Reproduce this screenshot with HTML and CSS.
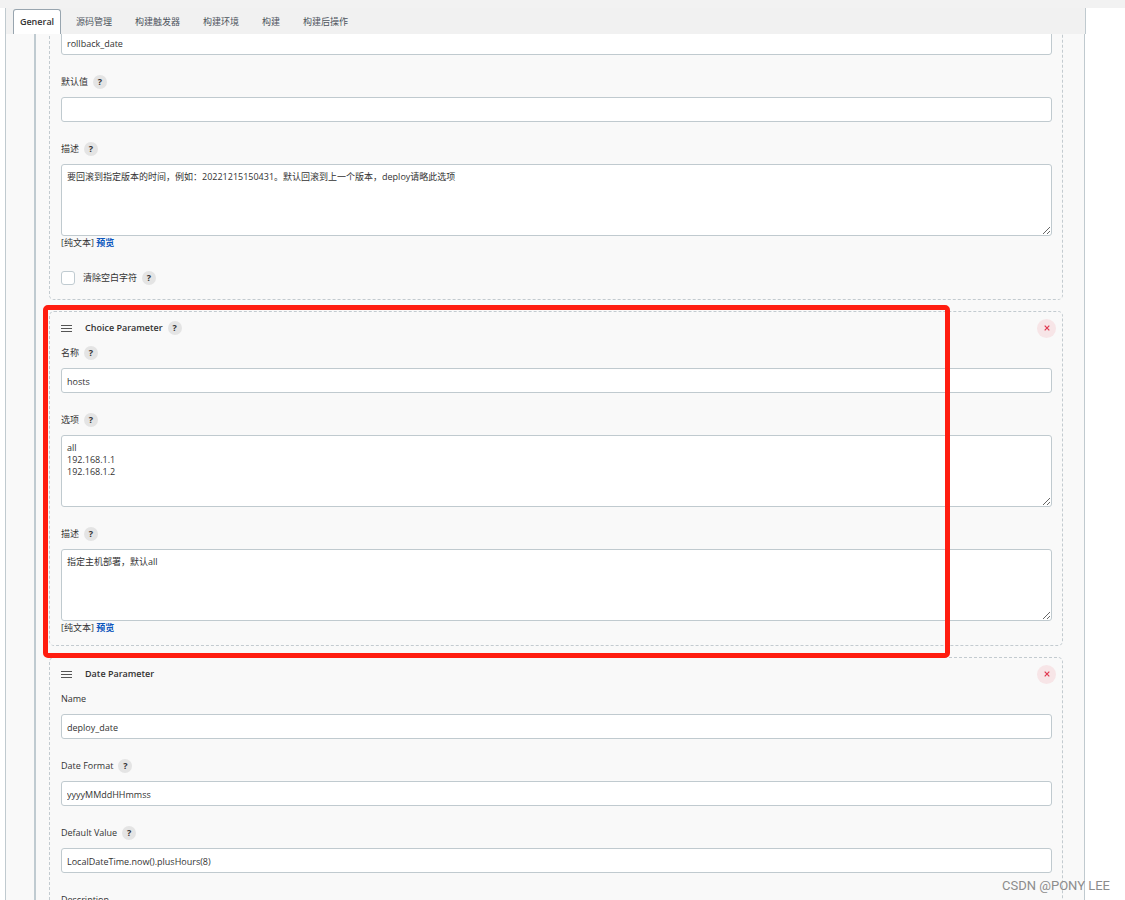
FILE: index.html
```html
<!DOCTYPE html>
<html lang="zh-CN">
<head>
<meta charset="utf-8">
<meta name="viewport" content="width=device-width, initial-scale=1">
<title>General</title>
<link rel="stylesheet" href="styles.css">
</head>
<body>
<div class="app">
  <nav class="tabs">
    <button class="tab tab-active" type="button">General</button>
    <button class="tab" type="button">源码管理</button>
    <button class="tab" type="button">构建触发器</button>
    <button class="tab" type="button">构建环境</button>
    <button class="tab" type="button">构建</button>
    <button class="tab" type="button">构建后操作</button>
  </nav>
  <main class="panel">
    <div class="params">
      <section class="card card-scrolled">
        <input class="control" type="text" value="rollback_date" aria-label="名称">
        <div class="label-row"><label for="s-default">默认值</label><button class="help" type="button">?</button></div>
        <input class="control" id="s-default" type="text">
        <div class="label-row"><label for="s-desc">描述</label><button class="help" type="button">?</button></div>
        <textarea class="control area" id="s-desc">要回滚到指定版本的时间，例如：20221215150431。默认回滚到上一个版本，deploy请略此选项</textarea>
        <div class="note">[纯文本] <a href="#preview">预览</a></div>
        <div class="check-row"><input class="check" id="s-trim" type="checkbox"><label for="s-trim">清除空白字符</label><button class="help" type="button">?</button></div>
      </section>

      <section class="card card-marked">
        <header class="card-head">
          <svg class="grip" viewBox="0 0 11 8" aria-hidden="true"><path d="M0 1.5h11M0 4.5h11M0 7.5h11"/></svg>
          <h2 class="title">Choice Parameter</h2><button class="help" type="button">?</button>
          <button class="remove" type="button" aria-label="删除"><svg viewBox="0 0 6 6"><path d="M.7.7l4.6 4.6M5.3.7L.7 5.3"/></svg></button>
        </header>
        <div class="label-row"><label for="c-name">名称</label><button class="help" type="button">?</button></div>
        <input class="control" id="c-name" type="text" value="hosts">
        <div class="label-row"><label for="c-options">选项</label><button class="help" type="button">?</button></div>
        <textarea class="control area" id="c-options">all
192.168.1.1
192.168.1.2</textarea>
        <div class="label-row"><label for="c-desc">描述</label><button class="help" type="button">?</button></div>
        <textarea class="control area" id="c-desc">指定主机部署，默认all</textarea>
        <div class="note">[纯文本] <a href="#preview">预览</a></div>
        <div class="marker"></div>
      </section>

      <section class="card">
        <header class="card-head">
          <svg class="grip" viewBox="0 0 11 8" aria-hidden="true"><path d="M0 1.5h11M0 4.5h11M0 7.5h11"/></svg>
          <h2 class="title">Date Parameter</h2>
          <button class="remove" type="button" aria-label="删除"><svg viewBox="0 0 6 6"><path d="M.7.7l4.6 4.6M5.3.7L.7 5.3"/></svg></button>
        </header>
        <div class="label-row"><label for="d-name">Name</label></div>
        <input class="control" id="d-name" type="text" value="deploy_date">
        <div class="label-row"><label for="d-format">Date Format</label><button class="help" type="button">?</button></div>
        <input class="control" id="d-format" type="text" value="yyyyMMddHHmmss">
        <div class="label-row"><label for="d-default">Default Value</label><button class="help" type="button">?</button></div>
        <input class="control" id="d-default" type="text" value="LocalDateTime.now().plusHours(8)">
        <div class="label-row"><label for="d-desc">Description</label></div>
        <textarea class="control area" id="d-desc"></textarea>
      </section>
    </div>
  </main>
  <div class="credit">CSDN @PONY LEE</div>
</div>
</body>
</html>
```
FILE: styles.css
```css
* {
  box-sizing: border-box;
}

body {
  margin: 0;
  background: #fff;
  color: #333;
  font: 9px/12px "Open Sans", "Noto Sans CJK SC", sans-serif;
}

button,
input,
textarea {
  margin: 0;
  color: inherit;
  font: inherit;
}

.app {
  position: relative;
  display: flex;
  flex-direction: column;
  height: 100vh;
  overflow: hidden;
  border-top: 8px solid #f2f2f2;
}

.tabs {
  flex: none;
  display: flex;
  height: 26px;
  margin: 0 39px 0 5px;
  padding: 1px 0 0 7px;
  background: #f1f1f1;
  border: solid #c0cacf;
  border-width: 0 1px;
}

.tab {
  padding: 0;
  margin-left: 23px;
  border: 0;
  background: none;
  color: #4d545d;
}

.tab-active {
  width: 48px;
  margin: 0 -8px 0 0;
  border: 1px solid #98a5af;
  border-bottom: 0;
  border-radius: 3px 3px 0 0;
  background: #fff;
  color: #333;
  font-weight: 600;
}

.panel {
  flex: 1;
  min-height: 0;
  overflow: hidden;
  margin: 0 40px 0 5px;
  padding: 0 21px 0 28px;
  background: #f9f9f9;
  border: solid #c0cacf;
  border-width: 0 1px;
}

.params {
  padding-left: 13px;
  border-left: 2px solid #c0cbd1;
}

.card {
  display: flex;
  flex-direction: column;
  margin-bottom: 11px;
  padding: 8px 10px 10px 11px;
  border: 1px dashed #c3cbd0;
  border-radius: 5px;
}

.card-scrolled {
  margin-top: -13px;
}

.card-marked {
  position: relative;
}

.marker {
  position: absolute;
  inset: -7px 112px -13px -7px;
  z-index: 1;
  border: 5px solid #ff1d10;
  border-radius: 5px;
  pointer-events: none;
}

.card-head {
  display: flex;
  align-items: center;
  height: 16px;
  margin-bottom: 9px;
}

.grip {
  width: 11px;
  height: 8px;
  margin-right: 13px;
  fill: none;
  stroke: #555;
  shape-rendering: crispEdges;
}

.title {
  margin: 0;
  font: inherit;
  font-weight: 600;
}

.remove {
  display: grid;
  place-items: center;
  width: 19px;
  height: 19px;
  margin: 0 -4px 0 auto;
  padding: 0;
  border: 0;
  border-radius: 50%;
  background: #f7e5e7;
}

.remove svg {
  width: 6px;
  height: 6px;
  fill: none;
  stroke: #e0374f;
  stroke-width: 1.2;
}

.label-row {
  display: flex;
  align-items: center;
  height: 16px;
  margin-bottom: 7px;
}

.control + .label-row {
  margin-top: 19px;
}

.help {
  width: 14px;
  height: 14px;
  margin-left: 5px;
  padding: 0;
  border: 0;
  border-radius: 50%;
  background: #e4e4e4;
  line-height: 14px;
  font-weight: 700;
}

.control {
  width: 100%;
  height: 25px;
  padding: 1px 5px 0;
  border: 1px solid #c0cacf;
  border-radius: 3px;
  background: #fff;
  outline: 0;
}

.area {
  display: block;
  height: 72px;
  padding-top: 6px;
  resize: vertical;
}

.note {
  line-height: 14px;
}

.note a {
  color: #0b56bd;
  font-weight: 700;
  text-decoration: none;
}

.check-row {
  display: flex;
  align-items: center;
  height: 17px;
  margin: 19px 0 3px;
}

.check {
  appearance: none;
  width: 14px;
  height: 14px;
  margin-right: 8px;
  border: 1px solid #c0cbd1;
  border-radius: 3px;
  background: #fff;
}

.credit {
  position: absolute;
  right: 15px;
  bottom: 6px;
  color: #8c8c8c;
  font: 13px/16px Roboto, sans-serif;
}
```
